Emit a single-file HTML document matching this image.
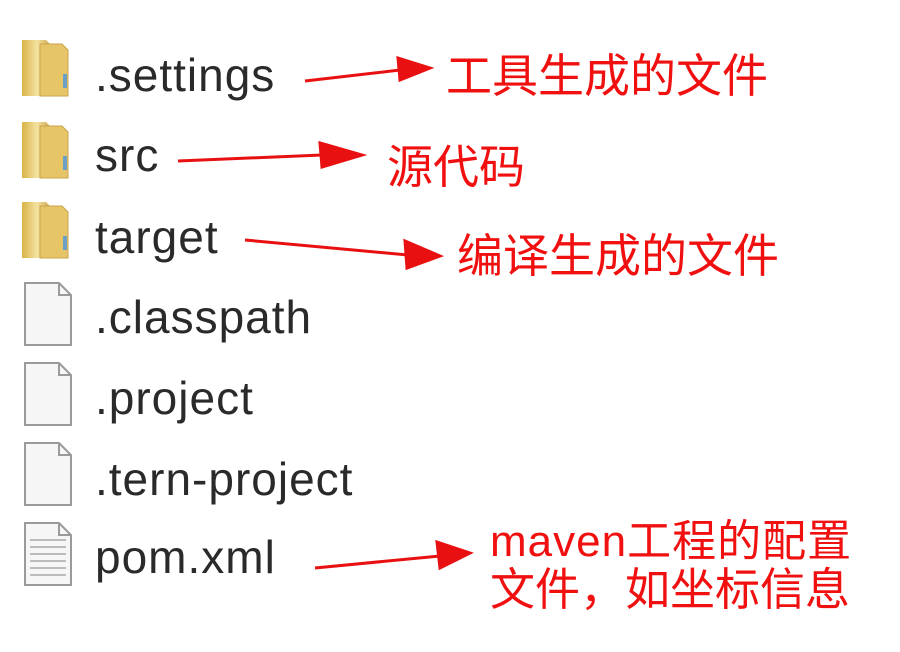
<!DOCTYPE html>
<html><head><meta charset="utf-8"><style>
html,body{margin:0;width:900px;height:652px;background:#fff;overflow:hidden;position:relative}
.t{position:absolute;left:95px;font:46px "Liberation Sans","DejaVu Sans",sans-serif;color:#2a2a2a;line-height:1;letter-spacing:1px}
.r{position:absolute;font:42px "Liberation Sans","Noto Sans CJK SC",sans-serif;color:#f01010;line-height:1;white-space:nowrap}
svg{position:absolute;left:0;top:0}
</style></head><body>
<svg width="900" height="652">
<defs>
<linearGradient id="f" x1="0" x2="1"><stop offset="0" stop-color="#d9b24a"/><stop offset=".5" stop-color="#f3e2a0"/><stop offset="1" stop-color="#caa045"/></linearGradient>
<g id="fold"><path d="M22 0h24l6 6v50H22z" fill="url(#f)"/><path d="M40 4h22l6 6v46H40z" fill="#e5c567" stroke="#c9a54a"/><rect x="63" y="34" width="4" height="14" fill="#6aa0c8"/></g>
<g id="doc"><path d="M25 0h34l12 12v50H25z" fill="#f6f6f6" stroke="#9a9a9a" stroke-width="2"/><path d="M59 0v12h12" fill="none" stroke="#9a9a9a" stroke-width="2"/></g>
</defs>
<use href="#fold" y="40"/><use href="#fold" y="122"/><use href="#fold" y="202"/>
<use href="#doc" y="283"/><use href="#doc" y="363"/><use href="#doc" y="443"/>
<g><use href="#doc" y="523"/><g stroke="#bbb" stroke-width="2"><line x1="30" x2="66" y1="540" y2="540"/><line x1="30" x2="66" y1="547" y2="547"/><line x1="30" x2="66" y1="554" y2="554"/><line x1="30" x2="66" y1="561" y2="561"/><line x1="30" x2="66" y1="568" y2="568"/><line x1="30" x2="66" y1="575" y2="575"/></g></g>
<g stroke="#e81010" stroke-width="3" fill="#e81010">
<path d="M305 81L400 70" fill="none"/><path d="M398 58L430 68L400 80z"/>
<path d="M178 161L322 155" fill="none"/><path d="M320 143L362 155L322 167z"/>
<path d="M245 240L408 255" fill="none"/><path d="M405 241L440 256L407 268z"/>
<path d="M315 568L440 556" fill="none"/><path d="M437 542L470 553L440 568z"/>
</g>
</svg>
<div class="t" style="top:52px">.settings</div>
<div class="t" style="top:132px">src</div>
<div class="t" style="top:214px">target</div>
<div class="t" style="top:294px">.classpath</div>
<div class="t" style="top:375px">.project</div>
<div class="t" style="top:456px">.tern-project</div>
<div class="t" style="top:534px">pom.xml</div>
<div class="r" style="left:446px;top:53px;font-size:46px">工具生成的文件</div>
<div class="r" style="left:387px;top:144px;font-size:46px">源代码</div>
<div class="r" style="left:457px;top:233px;font-size:46px">编译生成的文件</div>
<div class="r" style="left:490px;top:520px;font-size:44px;letter-spacing:1px">maven工程的配置</div>
<div class="r" style="left:490px;top:567px;font-size:45px">文件，如坐标信息</div>
</body></html>
